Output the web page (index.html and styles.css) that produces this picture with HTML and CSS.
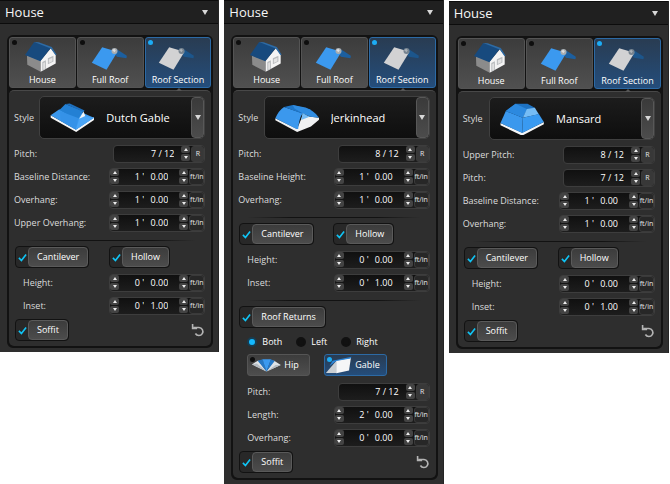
FILE: index.html
```html
<!DOCTYPE html>
<html lang="en">
<head>
<meta charset="utf-8">
<title>House</title>
<link rel="stylesheet" href="styles.css">
</head>
<body>
<svg class="sprites" aria-hidden="true">
  <symbol id="i-house" viewBox="75 120 102 98">
    <path fill="#8b8b8b" d="M83 164l42 16v34l-41-21z"/>
    <path fill="#f4f4f4" d="M125 180l31-38 15 20v27l-46 25z"/>
    <path fill="#b9bcbe" d="M130 184l11-5v26l-11 6zM147 173l17-8v18l-17 8z"/>
    <path fill="#e4e4e4" d="M133 187l5-2v20l-5 3zM150 176l11-5v11l-11 5z"/>
    <path fill="#174a7e" d="M105 123l52 17-33 42-47-19z"/>
    <path fill="#2d6ba6" d="M105 123l14 1 40 14 15 24-4 1-14-20z"/>
  </symbol>
  <symbol id="i-full" viewBox="275 128 110 78">
    <path fill="#1c5f9f" d="M336 139l15 1 31 20-1 8-29-5z"/>
    <path fill="#3b99ef" d="M308 135l46 13-33 54-44-21z"/>
    <circle cx="345" cy="146" r="9" fill="#a9adb0"/>
    <path fill="#ddd" d="M338 144l6-5 5 5-4 6z"/>
  </symbol>
  <symbol id="i-section" viewBox="275 128 110 78">
    <path fill="#1c568c" d="M336 139l15 1 31 20-1 8-29-5z"/>
    <path fill="#d2d2d3" d="M308 135l46 13-33 54-44-21z"/>
    <circle cx="345" cy="146" r="9" fill="#76838f"/>
    <path fill="#a9b0b6" d="M338 144l6-5 5 5-4 6z"/>
  </symbol>
  <symbol id="i-dutch" viewBox="145 303 140 93">
    <path fill="#f5f6f7" d="M150 343l75 42 54-36v8l-53 36-76-43z"/>
    <path fill="#3b98ed" d="M150 343l25-17 66 8 38 16-54 36z"/>
    <path fill="#2380d4" d="M176 327l18-18 54 22-16 22-4 3z"/>
    <path fill="#3592e8" d="M178 331l54 20-7 34-46-26z"/>
    <path fill="#1e6fbd" d="M194 309l13-1 44 21-3 4z"/>
    <path fill="#4aa5f6" d="M236 350l17-5 26 5-54 36z"/>
    <path fill="#f2f4f5" d="M248 332l5 13-18 8z"/>
  </symbol>
  <symbol id="i-jerkinhead" viewBox="153 303 140 93">
    <path fill="#f0f1f2" d="M157 352l65 32 16-40 49 6v6l-24 20-41 17-65-35z"/>
    <path fill="#3b98ed" d="M157 352q10-24 26-34l55 19q-11 18-13 47l-5 0z"/>
    <path fill="#1e76c8" d="M183 318l26-6 53 14-24 12z"/>
    <path fill="#308ce0" d="M209 312l38 8q24 8 40 30l-26-3-23-10-24-14z"/>
    <path fill="#75bcf5" d="M238 336l21 11-25 10z"/>
  </symbol>
  <symbol id="i-mansard" viewBox="157 303 140 99">
    <path fill="#f5f6f7" d="M161 366l65 29 65-32v7l-65 34-65-31z"/>
    <path fill="#3b98ed" d="M161 366l16-36 51 20-2 46z"/>
    <path fill="#1e72c2" d="M206 308l36 0 22 12-29 15-7 15-51-20z"/>
    <path fill="#2c89df" d="M177 330l29-22 34 16-12 26z"/>
    <path fill="#75bcf5" d="M240 324l24-4 12 20-48 10z"/>
    <path fill="#399af1" d="M228 350l48-11 15 24-65 33z"/>
  </symbol>
  <symbol id="i-hip" viewBox="89 18 102 50">
    <path fill="#dfe3e6" d="M92 41l21-13 27 36zM187 43l-23-15-24 36z"/>
    <path fill="#b5bcc2" d="M92 41l16-3 32 26zM187 43l-17 0-30 21z"/>
    <path fill="#2577c4" d="M111 29l17-5 12 40z"/>
    <path fill="#3b9af0" d="M127 24l28 0-15 40z"/>
    <path fill="#2577c4" d="M154 24l13 6-27 34z"/>
  </symbol>
  <symbol id="i-gable" viewBox="318 12 92 62">
    <path fill="#c9ced2" d="M321 69l35-41v41z"/>
    <path fill="#f5f6f7" d="M355 28l48-8-6 41-42 9z"/>
    <path fill="#2c86d9" d="M333 46l10-17 62-13-3 6-47 8z"/>
  </symbol>
  <symbol id="i-check" viewBox="0 0 10 10">
    <path d="M1 5.400L3.800 8.400L9 1.600" fill="none" stroke="#10c4f5" stroke-width="1.800"/>
  </symbol>
  <symbol id="i-reset" viewBox="0 0 14 14">
    <path d="M2.200 4.500H8a4 4 0 1 1-3.600 6" fill="none" stroke="#b4b4b4" stroke-width="1.600"/>
    <path d="M1.600 1v4.500h4.500" fill="none" stroke="#b4b4b4" stroke-width="1.600"/>
  </symbol>
</svg>
<main class="panels" id="panels"></main>
<script src="app.js"></script>
</body>
</html>
```
FILE: styles.css
```css
* { box-sizing: border-box; }

body {
  margin: 0;
  background: #fff;
  color: #dcdcdc;
  font: 9px/14px "Open Sans", "Noto Sans", sans-serif;
}

button, input, select {
  margin: 0;
  padding: 0;
  border: 0;
  background: none;
  color: inherit;
  font: inherit;
}

svg { display: block; }
.sprites { position: absolute; width: 0; height: 0; }

.panels {
  display: grid;
  grid-template-columns: 219fr 219fr 220fr;
  align-items: start;
  gap: 5px;
  padding-right: 1px;
}

.panel {
  padding-bottom: 4px;
  background: #2e2e2e;
  border-right: 1px solid #242424;
}

.panel:last-child { margin-top: 1px; }

.panel-head {
  display: flex;
  align-items: center;
  justify-content: space-between;
  height: 24px;
  margin-bottom: 11px;
  padding: 0 10px 0 5px;
  border-top: 1px solid #0c0c0c;
  border-bottom: 1px solid #0c0c0c;
  background: #202020;
}

.panel-head h2 {
  margin: 0;
  color: #f6f6f6;
  font-size: 13px;
  font-weight: 400;
  line-height: 20px;
}

.down {
  width: 0;
  border: 3px solid transparent;
  border-top: 5px solid #d8d8d8;
  border-bottom: 0;
}

.frame {
  margin: 0 5px 0 7px;
  border: 2px solid #121212;
  border-radius: 6px;
  background: #121212;
}

.tabs {
  display: grid;
  grid-template-columns: repeat(3, 1fr);
  gap: 1px;
}

.tab {
  position: relative;
  display: flex;
  flex-direction: column;
  align-items: center;
  justify-content: space-between;
  height: 51px;
  padding: 3px 0 0;
  border: 1px solid #545454;
  border-radius: 3px;
  background: linear-gradient(#3c3c3c, #505050);
  color: #fff;
}

.tab svg { width: 34px; height: 33px; margin-right: 2px; }
.tab .slim { width: 37px; height: 26px; margin: 4px 2px 0 0; }
.tab.on, .kind.on { border-color: #2c6aa5; background: linear-gradient(#293c52, #244d7b); }

.tab::before, .kind::before {
  content: "";
  position: absolute;
  top: 2px;
  left: 2px;
  width: 5px;
  height: 5px;
  border-radius: 50%;
  background: #0e0e0e;
}

.tab.on::before, .kind.on::before { background: #1cacf5; }

.tab.on::after {
  content: "";
  position: absolute;
  bottom: -4px;
  left: 30px;
  border: 3px solid transparent;
  border-top: 0;
  border-bottom-color: #555;
}

.body {
  margin-top: 2px;
  padding: 5px 6px 5px 5px;
  border-top: 1px solid #484848;
  border-radius: 5px;
  background: #2e2e2e;
}

.style-row {
  display: flex;
  align-items: center;
  justify-content: space-between;
  margin-bottom: 3px;
}

.picker {
  position: relative;
  display: flex;
  align-items: center;
  width: 166px;
  height: 43px;
  padding-left: 9px;
  border: 1px solid #404040;
  border-radius: 5px;
  background: linear-gradient(#1c1c1c, #0e0e0e);
}

.picker svg { width: 47px; height: 33px; }

.picker select {
  flex: 1;
  align-self: stretch;
  width: 0;
  padding: 0 14px 0 10px;
  appearance: none;
  color: #fff;
  font-size: 11px;
}

.picker-arrow {
  position: absolute;
  top: 0;
  right: 0;
  bottom: 0;
  display: grid;
  place-items: center;
  width: 13px;
  border: 1px solid #585858;
  border-radius: 4px;
  background: linear-gradient(#3a3a3a, #4c4c4c);
  pointer-events: none;
}

.row {
  display: flex;
  align-items: center;
  justify-content: space-between;
  height: 23px;
}

.sub { padding-left: 9px; }

.field {
  display: flex;
  align-items: center;
  gap: 1px;
  width: 96px;
  height: 18px;
  border: 1px solid #3d3d3d;
  border-radius: 4px;
  background: linear-gradient(#101010, #1d1d1d);
}

.field.pitch { width: 92px; }

.field input {
  flex: 1;
  width: 0;
  color: #fff;
  text-align: right;
  padding-right: 4px;
}

.field.pitch input { padding-right: 6px; }
.field .inch { flex: none; width: 29px; padding-right: 10px; }

.spin {
  display: grid;
  gap: 1px;
  width: 9px;
  height: 15px;
}

.spin button {
  display: grid;
  place-items: center;
  border-radius: 2px;
  background: #434343;
}

.spin button::before {
  content: "";
  border: 2px solid transparent;
  border-bottom: 3px solid #ededed;
  border-top: 0;
}

.spin .dec::before {
  border-top: 3px solid #ededed;
  border-bottom: 0;
}

.unit {
  display: flex;
  justify-content: center;
  width: 15px;
  height: 16px;
  border: 1px solid #3a3a3a;
  border-radius: 3px;
  background: #272727;
  color: #e8e8e8;
  font-size: 7px;
  line-height: 14px;
}

.pitch .unit { width: 13px; background: #383838; }

.rule {
  height: 1px;
  margin: 6px 9px 5px;
  border: 0;
  background: linear-gradient(90deg, #2e2e2e, #121212 25%, #121212 75%, #2e2e2e);
}

.checks {
  display: grid;
  grid-template-columns: 94px 1fr;
  align-items: center;
  height: 22px;
  margin-bottom: 3px;
  padding-left: 1px;
}

.check {
  display: flex;
  align-items: center;
  justify-self: start;
  height: 22px;
  border: 1px solid #121212;
  border-radius: 4px;
  background: #282828;
  color: #fff;
}

.check input, .radio input { position: absolute; opacity: 0; }
.check svg { width: 9px; height: 9px; margin: 0 1px 0 2px; }

.check span {
  height: 20px;
  padding: 0 8px;
  border: 1px solid #5a5a5a;
  border-radius: 4px;
  background: linear-gradient(#3c3c3c, #4c4c4c);
  line-height: 18px;
}

.radios {
  display: flex;
  align-items: center;
  gap: 14px;
  height: 21px;
  padding-left: 9px;
  color: #fff;
}

.radio { display: flex; align-items: center; gap: 5px; }

.radio i {
  width: 10px;
  height: 10px;
  border: 2px solid #111;
  border-radius: 50%;
  background: #111;
}

.radio input:checked + i { border-color: #163d52; background: #14b9ff; }

.kinds {
  display: grid;
  grid-template-columns: 63px 63px;
  gap: 14px;
  padding: 2px 0 4px 9px;
}

.kind {
  position: relative;
  display: flex;
  align-items: center;
  gap: 2px;
  height: 22px;
  padding-left: 3px;
  border: 1px solid #555;
  border-radius: 3px;
  background: linear-gradient(#3c3c3c, #4e4e4e);
  color: #fff;
}

.kind svg { width: 31px; height: 20px; }
.kind.on { padding-left: 0; }
.kind.on svg { width: 28px; }

.foot {
  display: flex;
  align-items: center;
  justify-content: space-between;
  margin-top: 2px;
  padding-left: 1px;
}

.reset svg { width: 14px; height: 14px; }
```
FILE: app.js
```js
const IN = (label, feet, inches, sub) => ({ label, feet, inches, sub });
const PITCH = (label, value, sub) => ({ label, value, sub });
const CANTILEVER = [
  { rule: true },
  { checks: ["Cantilever", "Hollow"] },
  IN("Height:", 0, "0.00", true),
  IN("Inset:", 0, "1.00", true),
];

const panels = [
  { style: "Dutch Gable", icon: "dutch", items: [
    PITCH("Pitch:", "7 / 12"), IN("Baseline Distance:", 1, "0.00"),
    IN("Overhang:", 1, "0.00"), IN("Upper Overhang:", 1, "0.00"), ...CANTILEVER,
  ] },
  { style: "Jerkinhead", icon: "jerkinhead", items: [
    PITCH("Pitch:", "8 / 12"), IN("Baseline Height:", 1, "0.00"),
    IN("Overhang:", 1, "0.00"), ...CANTILEVER,
    { rule: true }, { checks: ["Roof Returns"] }, { returns: true },
    PITCH("Pitch:", "7 / 12", true), IN("Length:", 2, "0.00", true),
    IN("Overhang:", 0, "0.00", true),
  ] },
  { style: "Mansard", icon: "mansard", items: [
    PITCH("Upper Pitch:", "8 / 12"), PITCH("Pitch:", "7 / 12"),
    IN("Baseline Distance:", 1, "0.00"), IN("Overhang:", 1, "0.00"), ...CANTILEVER,
  ] },
];

const icon = (name, cls = "") =>
  `<svg class="${cls}" aria-hidden="true"><use href="#i-${name}"/></svg>`;
const spin = `<span class="spin"><button type="button" aria-label="Increase"></button><button type="button" class="dec" aria-label="Decrease"></button></span>`;
const check = (text) =>
  `<label class="check"><input type="checkbox" checked>${icon("check")}<span>${text}</span></label>`;
const radio = (text, i) =>
  `<label class="radio"><input type="radio" name="side" ${i ? "" : "checked"}><i></i>${text}</label>`;

function item(it, id) {
  if (it.rule) return `<hr class="rule">`;
  if (it.checks) return `<div class="checks">${it.checks.map(check).join("")}</div>`;
  if (it.returns) {
    return `<div class="radios">${["Both", "Left", "Right"].map(radio).join("")}</div>
      <div class="kinds"><button type="button" class="kind">${icon("hip")}Hip</button>
      <button type="button" class="kind on">${icon("gable")}Gable</button></div>`;
  }
  const field = it.value
    ? `<div class="field pitch"><input id="${id}" value="${it.value}">${spin}<button type="button" class="unit">R</button></div>`
    : `<div class="field">${spin}<input id="${id}" value="${it.feet} '"><input class="inch" aria-label="Inches" value="${it.inches}">${spin}<button type="button" class="unit">ft/in</button></div>`;
  return `<div class="row${it.sub ? " sub" : ""}"><label for="${id}">${it.label}</label>${field}</div>`;
}

document.getElementById("panels").innerHTML = panels.map((p, n) => `
  <section class="panel">
    <header class="panel-head"><h2>House</h2><span class="down"></span></header>
    <div class="frame">
      <div class="tabs">
        <button type="button" class="tab">${icon("house")}House</button>
        <button type="button" class="tab">${icon("full", "slim")}Full Roof</button>
        <button type="button" class="tab on">${icon("section", "slim")}Roof Section</button>
      </div>
      <div class="body">
        <div class="style-row"><label for="style${n}">Style</label>
          <div class="picker">${icon(p.icon)}<select id="style${n}"><option>${p.style}</option></select>
          <span class="picker-arrow"><span class="down"></span></span></div></div>
        ${p.items.map((it, i) => item(it, `f${n}-${i}`)).join("")}
        <div class="foot">${check("Soffit")}<button type="button" class="reset" aria-label="Reset">${icon("reset")}</button></div>
      </div>
    </div>
  </section>`).join("");
```
